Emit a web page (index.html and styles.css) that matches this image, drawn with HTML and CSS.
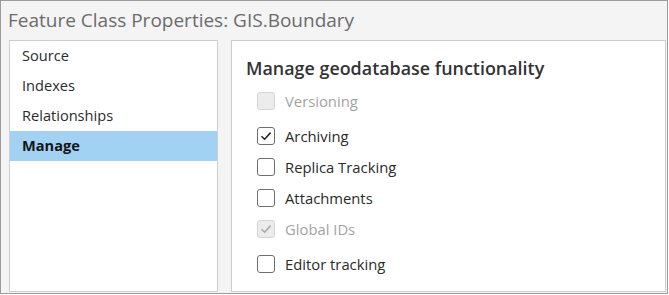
FILE: index.html
```html
<!DOCTYPE html>
<html lang="en">
<head>
    <meta charset="UTF-8">
    <meta name="viewport" content="width=device-width, initial-scale=1.0">
    <title>Feature Class Properties</title>
    <link rel="stylesheet" href="styles.css">
</head>
<body>
    <div class="window">
        <div class="title">Feature Class Properties: GIS.Boundary</div>

        <div class="body">
            <ul class="nav">
                <li>Source</li>
                <li>Indexes</li>
                <li>Relationships</li>
                <li class="active">Manage</li>
            </ul>

            <div class="content">
                <h2>Manage geodatabase functionality</h2>

                <div class="options">
                    <label class="option disabled first">
                        <span class="box"></span>
                        Versioning
                    </label>
                    <label class="option gap">
                        <span class="box checked">
                            <svg viewBox="0 0 16 16"><path d="M3.5 8.2 6.6 11.2 12.6 4.6"/></svg>
                        </span>
                        Archiving
                    </label>
                    <label class="option">
                        <span class="box"></span>
                        Replica Tracking
                    </label>
                    <label class="option">
                        <span class="box"></span>
                        Attachments
                    </label>
                    <label class="option disabled">
                        <span class="box checked">
                            <svg viewBox="0 0 16 16"><path d="M3.5 8.2 6.6 11.2 12.6 4.6"/></svg>
                        </span>
                        Global IDs
                    </label>
                    <label class="option gap">
                        <span class="box"></span>
                        Editor tracking
                    </label>
                </div>
            </div>
        </div>
    </div>
</body>
</html>
```

FILE: styles.css
```css
* {
    box-sizing: border-box;
}

body {
    margin: 0;
    font-family: 'Open Sans', 'Noto Sans', sans-serif;
    color: #333;
}

.window {
    width: 668px;
    height: 294px;
    border: 1px solid #9c9c9c;
    background: #f4f4f4;
    display: flex;
    flex-direction: column;
}

.title {
    height: 39px;
    line-height: 38px;
    padding-left: 7px;
    font-size: 19px;
    color: #6b6b6b;
    white-space: nowrap;
}

.body {
    flex: 1;
    display: flex;
    padding: 0 1px 1px 8px;
}

.nav {
    width: 209px;
    margin: 0;
    padding: 0;
    list-style: none;
    background: #fff;
    border: 1px solid #cdcdcd;
}

.nav li {
    height: 30px;
    line-height: 29px;
    padding-left: 12px;
    font-size: 14.6px;
    color: #2b2b2b;
}

.nav li.active {
    background: #a2d2f3;
    font-weight: 700;
    color: #151515;
}

.content {
    flex: 1;
    margin-left: 13px;
    background: #fff;
    border: 1px solid #cdcdcd;
    padding: 14px 14px 0 14px;
}

.content h2 {
    margin: 0 0 4px 0;
    font-size: 17.9px;
    font-weight: 600;
    color: #333;
    line-height: 26px;
}

.options {
    padding-left: 11px;
}

.option {
    display: flex;
    align-items: center;
    height: 31px;
    font-size: 14.8px;
    color: #2b2b2b;
}

.option.first {
    margin-top: 2px;
}

.option.gap {
    margin-top: 4px;
}

.option.disabled {
    color: #a3a3a3;
}

.box {
    width: 18px;
    height: 18px;
    margin-right: 10px;
    border: 1px solid #6e6e6e;
    border-radius: 3px;
    background: #fff;
    display: flex;
    align-items: center;
    justify-content: center;
}

.box svg {
    width: 16px;
    height: 16px;
    fill: none;
    stroke: #262626;
    stroke-width: 1.6;
}

.option.disabled .box {
    border-color: #d4d4d4;
    background: #ececec;
}

.option.disabled .box svg {
    stroke: #a8a8a8;
}
```
